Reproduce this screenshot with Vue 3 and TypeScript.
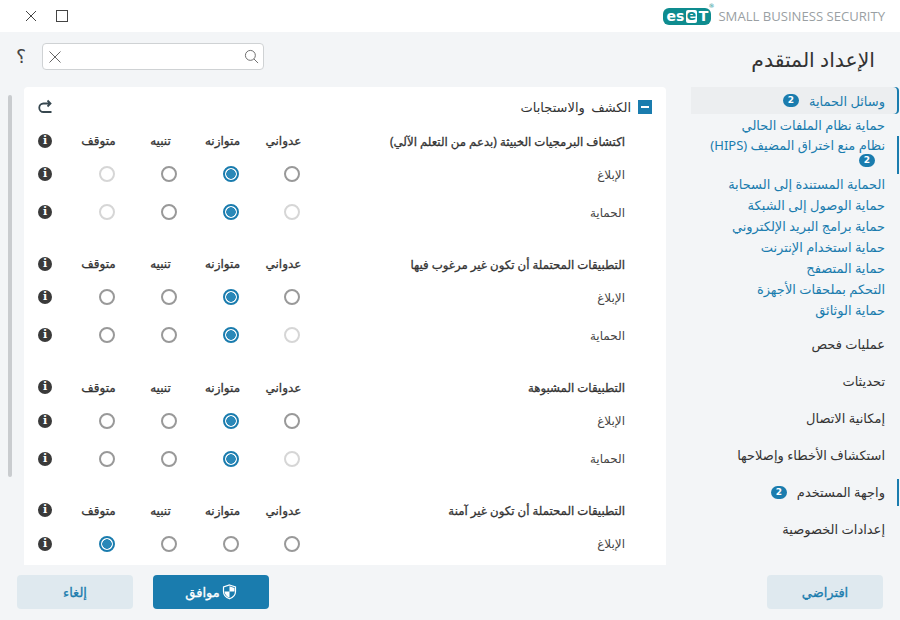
<script setup lang="ts">
type Level = 'off' | 'on' | 'sel'
interface Row { label: string; v: Level[] }
interface Group { title: string; rows: Row[] }

const columns = ['عدواني', 'متوازنه', 'تنبيه', 'متوقف']
const groups: Group[] = [
  {
    title: 'اكتشاف البرمجيات الخبيثة (بدعم من التعلم الآلي)',
    rows: [
      { label: 'الإبلاغ', v: ['on', 'sel', 'on', 'off'] },
      { label: 'الحماية', v: ['off', 'sel', 'on', 'off'] },
    ],
  },
  {
    title: 'التطبيقات المحتملة أن تكون غير مرغوب فيها',
    rows: [
      { label: 'الإبلاغ', v: ['on', 'sel', 'on', 'on'] },
      { label: 'الحماية', v: ['off', 'sel', 'on', 'on'] },
    ],
  },
  {
    title: 'التطبيقات المشبوهة',
    rows: [
      { label: 'الإبلاغ', v: ['on', 'sel', 'on', 'on'] },
      { label: 'الحماية', v: ['off', 'sel', 'on', 'on'] },
    ],
  },
  {
    title: 'التطبيقات المحتملة أن تكون غير آمنة',
    rows: [{ label: 'الإبلاغ', v: ['on', 'on', 'on', 'sel'] }],
  },
]
const subItems = [
  'حماية نظام الملفات الحالي',
  'HIPS',
  'الحماية المستندة إلى السحابة',
  'حماية الوصول إلى الشبكة',
  'حماية برامج البريد الإلكتروني',
  'حماية استخدام الإنترنت',
  'حماية المتصفح',
  'التحكم بملحقات الأجهزة',
  'حماية الوثائق',
]
const mainItems = ['عمليات فحص', 'تحديثات', 'إمكانية الاتصال', 'استكشاف الأخطاء وإصلاحها']
</script>

<template>
  <div class="app" dir="rtl">
    <header class="titlebar">
      <div class="brand" dir="ltr">
        <span class="logo"><span>es</span><span class="inv">e</span><span>T</span><sup class="reg">®</sup></span>
        <span class="product">SMALL BUSINESS SECURITY</span>
      </div>
      <div class="winbtns" dir="ltr">
        <svg width="12" height="12" viewBox="0 0 12 12"><path d="M1 1l10 10M11 1L1 11" stroke="#444" fill="none" /></svg>
        <span class="max"></span>
      </div>
    </header>

    <div class="body">
      <aside class="side">
        <h1 class="title">الإعداد المتقدم</h1>
        <nav class="nav">
          <div class="main-item active marked">
            <span>وسائل الحماية</span><b class="badge">2</b>
          </div>
          <template v-for="(s, i) in subItems" :key="i">
            <div v-if="s === 'HIPS'" class="sub hips marked">
              <div>نظام منع اختراق المضيف (HIPS)</div>
              <b class="badge">2</b>
            </div>
            <div v-else class="sub">{{ s }}</div>
          </template>
          <div class="mains">
            <div v-for="m in mainItems" :key="m" class="main-item">{{ m }}</div>
            <div class="main-item marked"><span>واجهة المستخدم</span><b class="badge">2</b></div>
            <div class="main-item">إعدادات الخصوصية</div>
          </div>
        </nav>
        <button class="btn light def">افتراضي</button>
      </aside>

      <main class="content">
        <div class="search-row">
          <div class="search" dir="ltr">
            <svg width="14" height="14" viewBox="0 0 14 14"><path d="M1.500 1.500l11 11M12.500 1.500l-11 11" stroke="#666" fill="none" /></svg>
            <svg width="15" height="15" viewBox="0 0 16 16"><circle cx="6.800" cy="6.800" r="5.300" stroke="#666" fill="none" /><path d="M10.600 10.600l4.400 4.400" stroke="#666" fill="none" /></svg>
          </div>
          <span class="help">؟</span>
        </div>

        <div class="panel-wrap">
          <div class="panel">
            <div class="panel-head">
              <span class="minus"><i></i></span>
              <span class="head-text">الكشف والاستجابات</span>
              <svg class="undo" width="16" height="16" viewBox="0 0 16 16"><path d="M10.500 1.500L13.500 4.500l-3 3M13.500 4.500H6.500a4 4 0 0 0 0 8.500h8" stroke="#37474f" stroke-width="1.800" fill="none" /></svg>
            </div>
            <section v-for="g in groups" :key="g.title" class="group">
              <div class="grid head">
                <div class="g-title">{{ g.title }}</div>
                <div v-for="c in columns" :key="c" class="col-name">{{ c }}</div>
                <div class="info-cell"><span class="info">i</span></div>
              </div>
              <div v-for="r in g.rows" :key="r.label" class="grid row">
                <div class="r-label">{{ r.label }}</div>
                <div v-for="(l, i) in r.v" :key="i" class="radio-cell"><span class="radio" :class="l"></span></div>
                <div class="info-cell"><span class="info">i</span></div>
              </div>
            </section>
          </div>
          <div class="scrollbar"></div>
        </div>

        <div class="actions">
          <button class="btn primary">
            <svg width="15" height="16" viewBox="0 0 15 16"><path d="M7.500 1l6 2v4.500c0 3.400-2.500 6-6 7.300-3.500-1.300-6-3.900-6-7.300V3z" fill="none" stroke="#fff" stroke-width="1.200" /><path d="M7.500 2.200l5 1.700v3.600h-5zM7.500 7.500v6.200c-2.800-1.100-4.800-3.300-5-6.200z" fill="#fff" /></svg>
            <span>موافق</span>
          </button>
          <button class="btn light cancel">إلغاء</button>
        </div>
      </main>
    </div>
  </div>
</template>

<style>
html, body { margin: 0; padding: 0; }
</style>

<style scoped>
.app {
  width: 900px;
  height: 620px;
  overflow: hidden;
  display: flex;
  flex-direction: column;
  background: #f3f5f7;
  color: #333;
  font-family: "Noto Sans", "DejaVu Sans", sans-serif;
  font-size: 12px;
}
.titlebar {
  height: 32px;
  flex: none;
  background: #fff;
  display: flex;
  justify-content: space-between;
  align-items: center;
  padding: 0 15px 0 25px;
}
.brand { display: flex; align-items: center; gap: 7px; }
.logo {
  position: relative;
  width: 48px;
  height: 17px;
  box-sizing: border-box;
  padding: 0 3px;
  border-radius: 6px;
  background: #0e8c8f;
  color: #fff;
  font: 700 14px/16px "DejaVu Sans", sans-serif;
  display: flex;
  justify-content: space-between;
  align-items: center;
}
.inv { background: #fff; color: #0e8c8f; height: 13px; line-height: 11px; padding: 0 1px; border-radius: 2px; }
.reg { position: absolute; top: -5px; right: -3px; font-size: 6px; line-height: 6px; color: #0e8c8f; font-weight: 400; }
.product { font: 13.100px "Open Sans", sans-serif; color: #9a9fa3; }
.winbtns { display: flex; align-items: center; gap: 19px; }
.max { width: 10px; height: 10px; border: 1px solid #444; }
.body { flex: 1; display: flex; min-height: 0; }
.side { width: 209px; flex: none; display: flex; flex-direction: column; }
.title { margin: 0; height: 55px; padding: 12px 25px 0 0; box-sizing: border-box; font-size: 20.400px; font-weight: 400; line-height: 30px; color: #333; }
.nav { flex: 1; margin-right: 1px; }
.main-item {
  height: 37px;
  display: flex;
  align-items: center;
  gap: 10px;
  padding-right: 14px;
  font-size: 13px;
  color: #333;
  box-sizing: border-box;
}
.marked { box-shadow: inset -2px 0 0 #1a7cae; }
.main-item.marked { height: 27px; margin: 5px 0; }
.main-item.active { margin: 0 0 1px; background: #eceef0; border-radius: 0 4px 4px 0; color: #1a7cae; }
.mains { margin-top: 4.500px; }
.badge {
  display: inline-block;
  width: 16px;
  height: 13px;
  border-radius: 7px;
  background: #1a7cae;
  color: #fff;
  font: 700 9px/13px "DejaVu Sans", sans-serif;
  text-align: center;
}
.sub { height: 21px; line-height: 21px; padding-right: 14px; color: #1a7cae; font-size: 13px; white-space: nowrap; }
.hips { height: 38px; line-height: 19px; }
.hips .badge { display: block; margin: -1px 10px 0 0; }
.def { margin: 0 17px 11px 0; -webkit-text-stroke: 0; }
.content { flex: 1; min-width: 0; display: flex; flex-direction: column; }
.search-row { height: 55px; flex: none; display: flex; align-items: flex-start; justify-content: flex-end; gap: 16px; padding: 11px 0 0 16px; box-sizing: border-box; }
.search {
  width: 222px;
  height: 27px;
  box-sizing: border-box;
  background: #fff;
  border: 1px solid #cfd2d4;
  border-radius: 4px;
  display: flex;
  justify-content: space-between;
  align-items: center;
  padding: 0 4px 0 5px;
}
.help { font-size: 19px; line-height: 27px; width: 10px; text-align: center; color: #444; }
.panel-wrap { flex: 1; min-height: 0; display: flex; position: relative; }
.panel { width: 642px; background: #fff; border-radius: 4px 4px 0 0; overflow: hidden; margin-right: 25px; flex: none; }
.scrollbar { position: absolute; left: 8px; top: 8px; width: 4px; height: 382px; background: #c9cccf; border-radius: 2px; }
.panel-head { height: 39px; display: flex; align-items: center; padding: 0 14px 0 0; gap: 7px; }
.minus { width: 14px; height: 14px; background: #1a7cae; display: flex; align-items: center; justify-content: center; }
.minus i { width: 8px; height: 2px; background: #fff; }
.head-text { flex: 1; font-size: 13px; word-spacing: 3px; color: #333; }
.undo { margin-left: 13px; }
.group { margin-bottom: 18.300px; }
.grid { display: grid; grid-template-columns: 344px 60px 62px 62px 62px 52px; }
.head { height: 29px; align-items: center; }
.row { height: 38px; align-items: center; }
.g-title { padding-right: 41px; font-size: 11.750px; -webkit-text-stroke: .3px #333; white-space: nowrap; color: #333; }
.col-name { text-align: center; font-size: 12px; -webkit-text-stroke: .3px #333; padding-right: 17px; color: #333; }
.r-label { padding-right: 41px; font-size: 12px; color: #444; }
.radio-cell { display: flex; justify-content: center; }
.radio { width: 16px; height: 16px; box-sizing: border-box; border-radius: 50%; border: 2px solid #999; background: #fff; }
.radio.off { border-color: #d6d6d6; }
.radio.sel { border-color: #1a7cae; background: radial-gradient(circle, #2a88b8 0 4.500px, #fff 5px); }
.info-cell { display: flex; justify-content: flex-end; padding-left: 14px; }
.info {
  width: 14px;
  height: 14px;
  border-radius: 50%;
  background: #3a3a3a;
  color: #fff;
  font: 700 11px/14px "DejaVu Serif", serif;
  text-align: center;
}
.actions { height: 55px; flex: none; display: flex; justify-content: flex-end; align-items: flex-start; padding: 10px 0 0 17px; box-sizing: border-box; gap: 20px; }
.btn {
  width: 116px;
  height: 34px;
  border: 0;
  border-radius: 4px;
  font-family: inherit;
  font-size: 13px;
  font-weight: 400;
  -webkit-text-stroke: .3px currentColor;
  display: flex;
  align-items: center;
  justify-content: center;
  gap: 2px;
}
.light { background: #dfe9ef; color: #1a7cae; }
.primary { background: #1a7cae; color: #fff; }
</style>
